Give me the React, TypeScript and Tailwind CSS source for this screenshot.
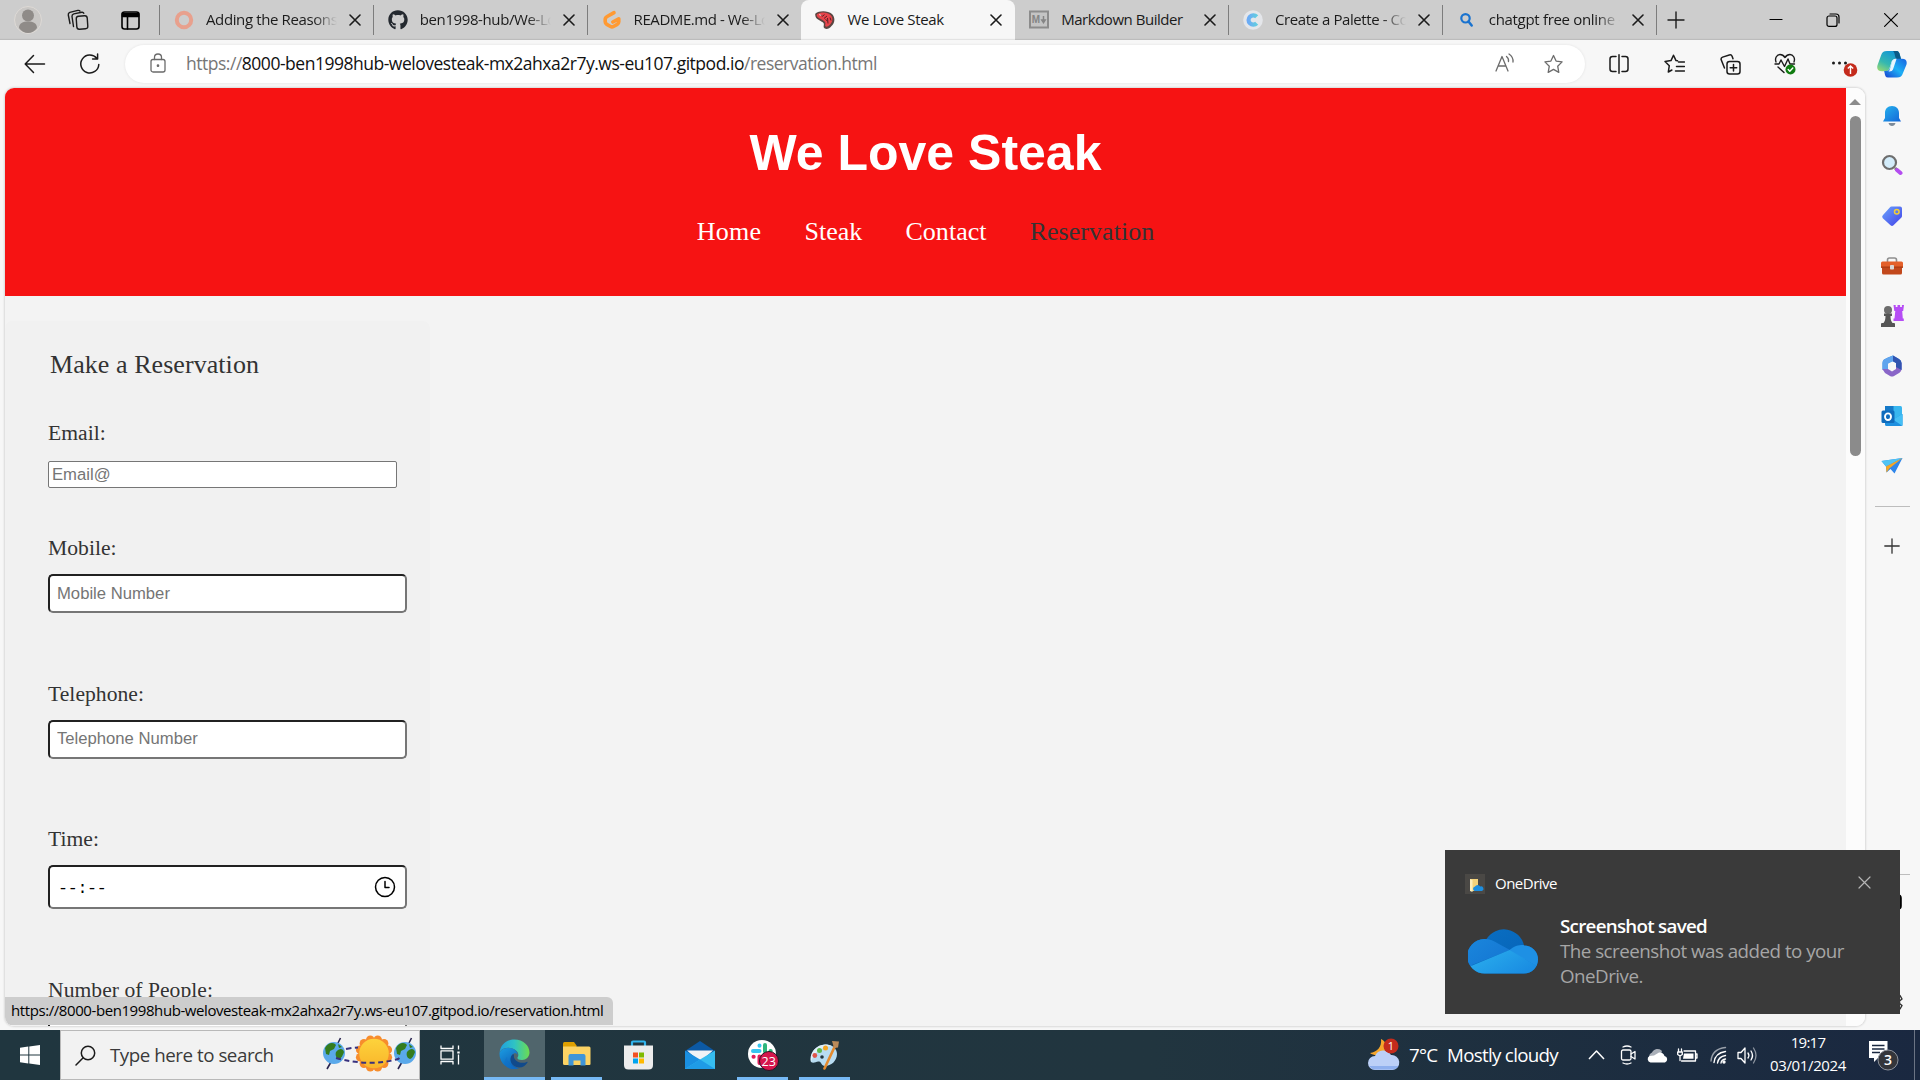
import React from "react";
import type { ReactNode } from "react";
import { FaGithub } from "react-icons/fa";

type IconProps = { w?: number; h?: number; vb?: string; sw?: number; className?: string; children: ReactNode };

/* Thin outline drawing, one user unit per pixel unless a viewBox is given. */
function Line({ w = 20, h = 20, vb, sw = 1.4, className = "", children }: IconProps) {
  return (
    <svg
      width={w}
      height={h}
      viewBox={vb ?? `0 0 ${w} ${h}`}
      fill="none"
      stroke="currentColor"
      strokeWidth={sw}
      strokeLinecap="round"
      strokeLinejoin="round"
      className={`block shrink-0 ${className}`}
    >
      {children}
    </svg>
  );
}

function Art({ w = 24, h = 24, vb, className = "", children }: IconProps) {
  return (
    <svg width={w} height={h} viewBox={vb ?? `0 0 ${w} ${h}`} className={`block shrink-0 ${className}`}>
      {children}
    </svg>
  );
}

/* ---------- tab strip ---------- */

const Close = () => (
  <Line w={12} h={12} sw={1.6} className="text-[#1b1b1b]">
    <path d="M1 1l10 10M11 1L1 11" />
  </Line>
);

const RingIcon = () => (
  <Art w={20} h={20}>
    <circle cx="10" cy="10" r="7.2" fill="none" stroke="#e8a08d" strokeWidth="4" />
  </Art>
);
const GitpodIcon = () => (
  <Art w={20} h={20}>
    <path
      d="M12 2.600L5.600 6.200Q3.200 7.500 3.200 9.200v2.600q0 1.700 1.600 2.600l3.700 2.100q1.500.8 3 0l3.700-2.100q1.600-.9 1.600-2.600V8.800L10.800 12"
      fill="none"
      stroke="#ff9a33"
      strokeWidth="3.600"
      strokeLinejoin="round"
      strokeLinecap="round"
    />
  </Art>
);
const SteakIcon = () => (
  <Art w={20} h={20}>
    <path d="M.5 3.500C4 .5 13 .500 17 4c3.500 3.500 3 9-.5 12-2 2.800-6 4-7.500 1.800-1-1.800.500-3-.5-4.800C7 11 1.500 10 .500 6.500.2 5 0 4.200.500 3.500z" fill="#5a4642" />
    <path d="M2 4.300C6 1.800 12.500 2 15.700 5.200c2.800 2.800 2 7-.8 9.500-1.600 1.600-3.800 2.600-4.500 1.600-.7-1.200.6-2.400-.3-4.100C8.500 9.500 3 8.700 2 6.300c-.3-.7-.4-1.200 0-2z" fill="#e8444a" />
    <path d="M5 4.800l2.500 1.400 2-1.600M9 8.500l3-2.500M12.500 8l.5 5.500M10.500 9.500l2 1.500M15 7.500l1 3" stroke="#5b2226" strokeWidth="1" fill="none" />
    <path d="M4.300 4.600l2 .8" stroke="#ffd8d0" strokeWidth="1.100" />
  </Art>
);
const MarkdownIcon = () => (
  <Art w={20} h={20}>
    <rect x="1" y="1.500" width="18" height="16" fill="#c4c4c4" stroke="#8c8c8c" strokeWidth="2" />
    <text x="2.800" y="13.300" fontSize="10" fontWeight="700" fill="#858585" fontFamily="Liberation Sans, sans-serif">M</text>
    <path d="M14.500 6v5.500M12.800 10l1.700 2.700 1.700-2.700z" stroke="#858585" strokeWidth="1.500" fill="#858585" />
  </Art>
);
const PaletteIcon = () => (
  <Art w={20} h={20}>
    <circle cx="10" cy="10" r="9.800" fill="#e4e6ea" />
    <path d="M13.700 6.800A4.700 4.700 0 1 0 13.700 13.200" fill="none" stroke="url(#pal)" strokeWidth="4.200" />
    <defs>
      <linearGradient id="pal" x1="0" x2="1">
        <stop offset="0" stopColor="#6cabf5" />
        <stop offset="1" stopColor="#62cde0" />
      </linearGradient>
    </defs>
  </Art>
);
const BingSearch = () => (
  <Art w={20} h={20}>
    <circle cx="8.500" cy="8.300" r="4.200" fill="none" stroke="#1a73cf" strokeWidth="2.200" />
    <path d="M11.500 11.500l3.200 4" stroke="#1a73cf" strokeWidth="2.500" strokeLinecap="round" />
  </Art>
);

type Tab = { title: string; icon: ReactNode; tracking: string; active?: boolean; divider?: boolean };
const tabs: Tab[] = [
  { title: "Adding the Reasons", icon: <RingIcon />, tracking: "tracking-[-0.380px]", divider: true },
  { title: "ben1998-hub/We-Lo", icon: <FaGithub size={20} color="#24292f" />, tracking: "tracking-[-0.400px]", divider: true },
  { title: "README.md - We-Lo", icon: <GitpodIcon />, tracking: "tracking-[-0.430px]" },
  { title: "We Love Steak", icon: <SteakIcon />, tracking: "tracking-[-0.360px]", active: true },
  { title: "Markdown Builder", icon: <MarkdownIcon />, tracking: "tracking-[-0.470px]", divider: true },
  { title: "Create a Palette - Co", icon: <PaletteIcon />, tracking: "tracking-[-0.420px]", divider: true },
  { title: "chatgpt free online -", icon: <BingSearch />, tracking: "tracking-[-0.314px]", divider: true },
];

function TabItem({ tab }: { tab: Tab }) {
  const fades = !tab.active && tab.title !== "Markdown Builder";
  return (
    <div
      className={`flex h-10 w-[213.800px] shrink-0 items-center pl-[14px] ${tab.active ? "rounded-t-[8px] bg-[#f7f7f7]" : ""}`}
    >
      <span className="flex h-5 w-5 shrink-0 items-center justify-center">{tab.icon}</span>
      <span
        className={`ml-[12px] h-10 w-[131px] shrink-0 overflow-hidden text-[15px] leading-[38px] whitespace-nowrap text-[#1b1b1b] ${tab.tracking} ${
          fades ? "[mask-image:linear-gradient(to_right,black_82%,transparent)]" : ""
        }`}
      >
        {tab.title}
      </span>
      <span className="ml-[12px]">
        <Close />
      </span>
      {tab.divider && <span className="ml-auto h-[30px] w-px bg-[#7d7d7d]" />}
    </div>
  );
}

function TabStrip() {
  return (
    <div className="flex h-10 shrink-0 items-center bg-[#cdcdcd]">
      <Art w={28} h={28} className="ml-[14px]">
        <circle cx="14" cy="14" r="13.500" fill="#c9c7c5" stroke="#dedad6" />
        <circle cx="14" cy="9.500" r="6" fill="#8f8b88" />
        <path d="M5 22c0-5 4-6.500 9-6.500s9 1.500 9 6.500c-2.500 3.500-5.500 5-9 5s-6.500-1.500-9-5z" fill="#8f8b88" />
      </Art>
      <Line w={22} h={22} sw={1.400} className="ml-[25px] text-[#1b1b1b]">
        <rect x="9.500" y="7" width="11" height="13" rx="2.500" transform="rotate(-4 15 13)" />
        <path d="M6.500 17.500L5 7.500q-.2-2 1.800-2.600l8-1.600q1.600-.2 2 1" />
        <path d="M3 14.500L1.300 6q-.3-2 1.500-2.600l8-2q1.600-.3 2.200.7" />
      </Line>
      <Line w={19} h={19} sw={1.600} className="ml-[32px] text-black">
        <rect x="1" y="1" width="17" height="17" rx="2.500" />
        <path d="M1.500 2.500h16v3h-16z" fill="currentColor" />
        <path d="M6.500 5v13" />
      </Line>
      <span className="ml-[19px] h-[30px] w-px bg-[#7d7d7d]" />
      <div className="flex">
        {tabs.map((t) => (
          <TabItem key={t.title} tab={t} />
        ))}
      </div>
      <Line w={18} h={18} sw={1.400} className="ml-[10px] text-[#1b1b1b]">
        <path d="M9 1v16M1 9h16" />
      </Line>
      <Line w={14} h={14} sw={1.200} className="mr-[43px] ml-auto text-black">
        <path d="M1 6.500h12" />
      </Line>
      <Line w={14} h={14} sw={1.200} className="mr-[44px] text-black">
        <rect x="1" y="3" width="10" height="10.400" rx="2" />
        <path d="M4 1h6q3 0 3 3v6" />
      </Line>
      <Line w={14} h={14} sw={1.200} className="mr-[22px] text-black">
        <path d="M.6.6l12.800 12.800M13.400.6L.6 13.400" />
      </Line>
    </div>
  );
}

/* ---------- toolbar ---------- */

const STAR = "M10 1.500l2.600 5.600 6 .8-4.400 4.300 1.100 6.200L10 15.400l-5.300 3 1.100-6.200L1.400 7.900l6-.8z";

function Copilot() {
  return (
    <Art w={30} h={28}>
      <defs>
        <linearGradient id="cpA" x1="0" y1="1" x2=".6" y2="0">
          <stop offset="0" stopColor="#a5dc6a" />
          <stop offset=".45" stopColor="#35b8b0" />
          <stop offset="1" stopColor="#1397d5" />
        </linearGradient>
        <linearGradient id="cpB" x1="0" y1="1" x2="1" y2="0">
          <stop offset="0" stopColor="#1840d0" />
          <stop offset=".5" stopColor="#1db0f5" />
          <stop offset="1" stopColor="#1a62e0" />
        </linearGradient>
      </defs>
      <path d="M10 1h9c3 0 3.500 2 4.200 5l.8 3h-5c-3 0-4 1-4.800 4l-1.600 5c-.8 2.500-2 3.300-4.500 3.300H5c-4 0-5.500-2.500-4.500-6L4 5.500C5 2.300 6.500 1 10 1z" fill="url(#cpA)" />
      <path d="M16 1h3c3 0 3.500 2 4.200 5l.8 3h-5c-1.500-4-1-6-3-8z" fill="#0b5a87" />
      <path d="M20 27.500h-9c-2.500 0-3-2-3.500-5l-.3-1.400h1.600c2.500 0 3.500-1 4.300-3.500l1.700-5.300c.8-2.500 1.700-3.600 4.200-3.600h6c4 0 5.400 2.500 4.400 6L26 23c-1 3.200-2.500 4.500-6 4.500z" fill="url(#cpB)" />
      <path d="M14.800 12q1-3.300 3.800-3.300h1L16 19.500q-.6 2-3.500 2h-1q1-.7 1.600-3z" fill="#fff" opacity=".9" />
    </Art>
  );
}

function Toolbar() {
  return (
    <div className="flex h-12 shrink-0 items-center bg-[#f7f7f7] shadow-[0_-1px_1px_rgba(0,0,0,0.08)]">
      <Line w={22} h={20} sw={1.500} className="ml-[24px] text-[#1b1b1b]">
        <path d="M20.500 10H1.500M9.500 1.500L1.200 10l8.300 8.500" />
      </Line>
      <Line w={22} h={22} sw={1.500} className="ml-[33px] text-[#1b1b1b]">
        <path d="M19.800 11.500A9 9 0 1 1 17.800 5.300M18.600 1v5h-5" />
      </Line>
      <div className="ml-[24px] flex h-[38px] w-[1460px] items-center rounded-full bg-white shadow-[0_0_3px_rgba(0,0,0,0.09)]">
        <Line w={16} h={20} sw={1.300} className="mb-[2px] ml-[25px] text-[#6b6b6b]">
          <rect x="1" y="6.500" width="14" height="12.500" rx="2" />
          <path d="M4.500 6.500V4.200a3.500 3.200 0 0 1 7 0v2.300" />
          <circle cx="8" cy="12.700" r=".7" fill="currentColor" />
        </Line>
        <p className="mb-[2px] ml-[20px] text-[17.500px] leading-[34px] tracking-[-0.484px] whitespace-nowrap text-[#767676]">
          https://<span className="text-[#111]">8000-ben1998hub-welovesteak-mx2ahxa2r7y.ws-eu107.gitpod.io</span>
          /reservation.html
        </p>
        <Line w={20} h={20} sw={1.300} className="mb-[2px] ml-auto text-[#6b6b6b]">
          <path d="M1 18L7 3.500 13 18M3 13h8M11.500 3.500q2.500 2 2 5M14 1q4.500 3 4 8" />
        </Line>
        <Line w={21} h={20} vb="0 0 20 20" sw={1.300} className="mr-[21px] ml-[28px] text-[#6b6b6b]">
          <path d={STAR} />
        </Line>
      </div>
      <div className="flex items-center text-[#1b1b1b]">
        <Line w={20} h={20} sw={1.500} className="ml-[24px]">
          <path d="M7 2.500H3.500Q1 2.500 1 5v10q0 2.500 2.500 2.500H7M13 2.500h3.500Q19 2.500 19 5v10q0 2.500-2.500 2.500H13M10 .8v18.400" />
        </Line>
        <Line w={21} h={20} sw={1.500} className="ml-[35px]">
          <path d="M13.500 6.800L12 6.600 9.500 1.200 7 6.600 1 7.500l4.300 4.200-1 6.300 3.600-2M14.500 8h6M12.500 12.500h8M11.500 17h9" />
        </Line>
        <Line w={21} h={21} sw={1.500} className="ml-[35px]">
          <rect x="7" y="7.500" width="13" height="12.500" rx="2.500" />
          <path d="M13.500 10.500v6.500M10.200 13.700h6.500M4.500 14L1.300 6q-.8-2 1.300-2.900L9.300 1q2-.6 2.800 1.200l.9 2.500" />
        </Line>
        <Line w={22} h={22} sw={1.400} className="ml-[33px]">
          <path d="M2 9C.5 5 3 1.500 6 1.500c2.500 0 4 1.500 5 3 1-1.500 2.500-3 5-3 3 0 5.500 3.500 4 7.500M1 11h4l2-4 3.500 6.500L14 6l2 5h4.500M4 14l6 5.500" />
          <circle cx="16.500" cy="16.500" r="5" fill="#107c10" stroke="none" />
          <path d="M14.200 16.600l1.600 1.600 3-3.200" stroke="#fff" />
        </Line>
        <Art w={28} h={26} className="ml-[35px]">
          <circle cx="2.500" cy="12" r="1.500" fill="#1b1b1b" />
          <circle cx="8.500" cy="12" r="1.500" fill="#1b1b1b" />
          <circle cx="14.500" cy="12" r="1.500" fill="#1b1b1b" />
          <circle cx="19.500" cy="19" r="6.800" fill="#c42b1c" />
          <path d="M19.500 23v-7.500M16.800 17.500l2.700-2.500 2.700 2.500" stroke="#fff" strokeWidth="1.400" fill="none" />
        </Art>
        <div className="ml-[18px]">
          <Copilot />
        </div>
      </div>
    </div>
  );
}

/* ---------- web page ---------- */

function TextInput({ placeholder, pad = "pb-[2px]" }: { placeholder: string; pad?: string }) {
  return (
    <input
      placeholder={placeholder}
      className={`mt-[14px] h-[39px] w-[359px] shrink-0 rounded-[5px] border-2 border-t-[#212121] border-r-[#767676] border-b-[#767676] border-l-[#212121] bg-white px-[7px] text-[16.670px] outline-none placeholder:text-[#757575] placeholder:opacity-100 ${pad}`}
    />
  );
}

const labelStyle = "text-[21.600px] leading-6 tracking-[0.040px] whitespace-nowrap";

function WebPage() {
  return (
    <div className="h-full w-[1841px] overflow-hidden bg-[#f3f3f3]">
      <header className="flex h-[208px] flex-col items-center bg-[#f61313] pt-[37px] text-white">
        <h1 className="text-[50px] leading-[56px] font-bold">We Love Steak</h1>
        <nav className="mt-[36px] flex gap-[43px] font-['Liberation_Serif',serif] text-[26px] leading-[30px] tracking-[0.050px]">
          <a className="tracking-[0.300px]">Home</a>
          <a>Steak</a>
          <a>Contact</a>
          <a className="text-[#333]">Reservation</a>
        </nav>
      </header>
      <form className="mt-[25px] flex h-[760px] w-[425px] flex-col items-start rounded-[8px] bg-[#f1f1f1] pt-[29px] pl-[43px] font-['Liberation_Serif',serif] text-[#333]">
        <h2 className="ml-[2px] text-[26px] leading-[30px] tracking-[0.060px]">Make a Reservation</h2>
        <label className={`mt-[41px] ${labelStyle}`}>Email:</label>
        <input
          placeholder="Email@"
          className="mt-[16px] h-[27px] w-[349px] shrink-0 rounded-[2px] border border-[#767676] bg-white px-[3px] font-['Liberation_Sans',sans-serif] text-[16.670px] outline-none placeholder:text-[#757575] placeholder:opacity-100"
        />
        <label className={`mt-[48px] ${labelStyle}`}>Mobile:</label>
        <div className="font-['Liberation_Sans',sans-serif]">
          <TextInput placeholder="Mobile Number" pad="pb-0" />
        </div>
        <label className={`mt-[69px] ${labelStyle}`}>Telephone:</label>
        <div className="font-['Liberation_Sans',sans-serif]">
          <TextInput placeholder="Telephone Number" />
        </div>
        <label className={`mt-[68px] ${labelStyle}`}>Time:</label>
        <div className="mt-[14px] flex h-[44px] w-[359px] shrink-0 items-center justify-between rounded-[5px] border-2 border-t-[#212121] border-r-[#767676] border-b-[#767676] border-l-[#212121] bg-white pr-[9px] pl-[8px] text-black">
          <span className="pt-[3px] font-['Liberation_Mono',monospace] text-[16.670px] leading-6 tracking-[-0.300px]">--:--</span>
          <Line w={22} h={22} sw={1.500}>
            <circle cx="11" cy="11" r="9.500" />
            <path d="M11 5.500V11.500h4" />
          </Line>
        </div>
        <label className={`mt-[69px] ${labelStyle}`}>Number of People:</label>
        <div className="font-['Liberation_Sans',sans-serif]">
          <TextInput placeholder="" />
        </div>
      </form>
    </div>
  );
}

function Viewport() {
  return (
    <div className="relative ml-[5px] flex h-[938px] w-[1860px] overflow-hidden rounded-[9px] bg-[#fcfcfc] shadow-[0_0_2px_1px_rgba(0,0,0,0.12)]">
      <WebPage />
      <div className="flex w-[19px] flex-col items-center bg-[#fcfcfc] pt-[11px] pr-px">
        <Art w={12} h={6}>
          <path d="M6 0l6 6H0z" fill="#8b8b8b" />
        </Art>
        <div className="mt-[11px] h-[340px] w-[11px] rounded-full bg-[#8b8b8b]" />
      </div>
      <div className="absolute bottom-px left-0 h-[28px] w-[608px] rounded-tr-[6px] bg-[#cdcdcd] pl-[6px] font-['Open_Sans',sans-serif] text-[15px] leading-[27px] tracking-[-0.415px] whitespace-nowrap text-black">
        https://8000-ben1998hub-welovesteak-mx2ahxa2r7y.ws-eu107.gitpod.io/reservation.html
      </div>
    </div>
  );
}

/* ---------- Edge side bar ---------- */

const sideIcons: ReactNode[] = [
  <Art key="bell" w={20} h={22}>
    <path d="M10 1c4.500 0 7 3 7 7v5l2 3.500H1L3 13V8c0-4 2.500-7 7-7z" fill="url(#bell)" />
    <path d="M6.500 18h7c-.5 2-1.800 3-3.500 3s-3-1-3.500-3z" fill="#7c8a99" />
    <defs>
      <linearGradient id="bell" x2="1" y2="1">
        <stop offset="0" stopColor="#25b4ee" />
        <stop offset="1" stopColor="#1465d8" />
      </linearGradient>
    </defs>
  </Art>,
  <Art key="search" w={22} h={22} className="mb-[3px]">
    <path d="M14 14l2 1.800" stroke="#777" strokeWidth="3" />
    <path d="M16 16l3.500 3" stroke="#b44df0" strokeWidth="4" strokeLinecap="round" />
    <circle cx="8.500" cy="8.500" r="6.500" fill="#d3ecfa" stroke="#6e6e6e" strokeWidth="2.200" />
  </Art>,
  <Art key="tag" w={22} h={22}>
    <path d="M10.500 1.500h8.500q2 0 2 2v7.500q0 1-.8 1.800l-7.700 7.500q-1.500 1.300-3 0l-7.700-7q-1.300-1.500 0-3l7-7.800q.7-1 1.700-1z" fill="url(#tag)" />
    <circle cx="15.800" cy="6.800" r="2.300" fill="#5a7cf0" stroke="#f5cf35" strokeWidth="1.500" />
    <defs>
      <linearGradient id="tag" x1="0" y1="0" x2="1" y2="1">
        <stop offset="0" stopColor="#6aa5fb" />
        <stop offset="1" stopColor="#4340e8" />
      </linearGradient>
    </defs>
  </Art>,
  <Art key="toolbox" w={24} h={20}>
    <path d="M7.500 6V4q0-2 2-2h5q2 0 2 2v2" fill="none" stroke="#8e8e8e" strokeWidth="1.600" />
    <rect x="2" y="9" width="20" height="9.500" rx="1.500" fill="#c2481c" />
    <path d="M2.500 5.500h19q1.500 0 1.500 1.500v4.500H1V7q0-1.500 1.500-1.500z" fill="#e4602a" />
    <rect x="1" y="10.500" width="22" height="1.300" fill="#a83a12" />
    <rect x="10" y="9" width="4" height="4.500" rx=".8" fill="#d8d8d8" />
  </Art>,
  <Art key="chess" w={24} h={24}>
    <path d="M13.500 1h2.200v2h1.800V1h2.600v2h1.800V1H24l-.8 6h-1l.6 7.500h1v2.500H13.500v-2.500h1L15.300 7h-1z" fill="#b64df5" />
    <circle cx="8" cy="6" r="4" fill="#6c6c6c" />
    <path d="M4 9.500h8V12h-1.500c0 3 .5 5 2 7H14q1 0 1 1v3H1v-3q0-1 1-1h1.500c1.500-2 2-4 2-7H4z" fill="#555" />
  </Art>,
  <Art key="m365" w={22} h={22}>
    <path d="M7 2.500l5-2 6 3.500q2.500 1.500 2.500 4v7L15 12V8l-4-2-4 2.500v5L1.500 15V8q0-2.500 1.500-3.500z" fill="#3e8be0" />
    <path d="M1.500 8q0-2.500 1.500-3.500L7 2.500 12 .5v5.800L7 8.500v6L4 17l-2.500-3z" fill="#5fa4ee" />
    <path d="M20.500 8v6q0 2.500-2 3.700l-5.500 3.400q-2 1-4 0L4 18l-2.500-4L7 14l4 2.500 4-2.500V8l3-2.500z" fill="#8a66c8" />
    <path d="M15 8l-3-1.700V.6l6 3.500q2.500 1.500 2.500 4v7L15 12z" fill="#3154b0" />
  </Art>,
  <Art key="outlook" w={22} h={22}>
    <rect x="4" y="1" width="17" height="13" rx="1.500" fill="#38b6ef" />
    <rect x="4" y="1" width="8.500" height="6" fill="#1579c8" />
    <path d="M4 9l9 5 8.500-5v10.500q0 1.500-1.500 1.500H5.500Q4 21 4 19.500z" fill="#1e90e0" />
    <path d="M21.500 9v12L12 14.500z" fill="#45bff5" />
    <rect x=".5" y="5.500" width="13" height="12.500" rx="1.500" fill="#0f6cbd" />
    <ellipse cx="7" cy="11.700" rx="3" ry="3.300" fill="none" stroke="#fff" strokeWidth="1.900" />
  </Art>,
  <Art key="drop" w={22} h={20}>
    <path d="M.5 5L21.500 2 13.500 17.500 9.500 13 5.500 16.500 5 10.500z" fill="#2f86ea" />
    <path d="M.5 5L21.500 2 5 10.500z" fill="#50c4f4" />
    <path d="M5 10.500L21.500 2 8.300 12.500 5.500 16.500z" fill="#f5a623" />
  </Art>,
];

function SideBar() {
  return (
    <aside className="flex h-full w-[55px] flex-col items-center overflow-hidden pt-[3px] pr-px">
      {sideIcons.map((icon, i) => (
        <div key={i} className="flex h-[50px] shrink-0 items-center justify-center">
          {icon}
        </div>
      ))}
      <div className="mt-[15px] h-px w-[35px] shrink-0 bg-[#bdbdbd]" />
      <div className="flex h-[78px] shrink-0 items-center text-[#333]">
        <Line w={16} h={16} sw={1.300}>
          <path d="M8 .8v14.400M.8 8h14.400" />
        </Line>
      </div>
      <div className="mt-[289px] h-px w-[35px] shrink-0 bg-[#bdbdbd]" />
      <div className="mt-[17px]">
        <Line w={20} h={20} sw={1.600} className="text-black">
          <rect x="1" y="3" width="18" height="14" rx="3" fill="currentColor" />
        </Line>
      </div>
      <div className="mt-[79px]">
        <Line w={22} h={22} sw={1.500} className="text-[#333]">
          <path d="M9 1h4l.5 3 2.500 1.500 3-1 2 3.500-2.500 2v2.500l2.500 2-2 3.500-3-1L13.500 18l-.5 3H9l-.5-3L6 16.500l-3 1L1 14l2.500-2V9.500L1 7.500 3 4l3 1 2.500-1.500z" />
          <circle cx="11" cy="11" r="3" />
        </Line>
      </div>
    </aside>
  );
}

/* ---------- toast ---------- */

function Toast() {
  return (
    <div className="absolute top-[850px] left-[1445px] flex h-[164px] w-[455px] flex-col bg-[#3a3a3a] font-['Open_Sans',sans-serif]">
      <div className="mt-[24px] flex h-5 items-center pr-[29px] pl-5">
        <Art w={20} h={20} className="bg-[#4a4845]">
          <path d="M5 5h8v12H5z" fill="#f3d27a" />
          <path d="M5 5l2.500 1v12L5 17z" fill="#fdeebb" />
          <path d="M9.500 17a2.300 2.300 0 0 1 .5-4.400 3 3 0 0 1 5.300 0 2.200 2.200 0 0 1 1.700 4.400z" fill="#1c8ee0" />
        </Art>
        <span className="mb-[2px] ml-[10px] text-[15px] leading-5 tracking-[-0.500px] text-white">OneDrive</span>
        <Line w={13} h={13} sw={1.200} className="mb-[4px] ml-auto text-[#b5b5b5]">
          <path d="M1 1l11 11M12 1L1 12" />
        </Line>
      </div>
      <div className="mt-[19px] flex pl-[23px]">
        <Art w={70} h={46} className="mt-[15px]">
          <defs>
            <linearGradient id="odA" x2="1" y2="1">
              <stop offset="0" stopColor="#0a70c4" />
              <stop offset="1" stopColor="#0560b4" />
            </linearGradient>
            <linearGradient id="odB" x2="1" y2="1">
              <stop offset="0" stopColor="#1a86dc" />
              <stop offset="1" stopColor="#1372d0" />
            </linearGradient>
            <linearGradient id="odC" x2="1" y2=".6">
              <stop offset="0" stopColor="#2bb0ee" />
              <stop offset="1" stopColor="#1a8de2" />
            </linearGradient>
            <clipPath id="od">
              <path d="M17 45.500A17 17 0 0 1 16 11q1.500 0 2.500.1A20.500 20.500 0 0 1 56 17.500 14 14 0 0 1 56 45.500z" />
            </clipPath>
          </defs>
          <g clipPath="url(#od)">
            <rect width="72" height="46" fill="url(#odA)" />
            <path d="M0 46V11h16c6 0 10 2 14 4.500L42 22 4 37z" fill="url(#odB)" />
            <path d="M41 22.500C46 18 50 17 55 17h15v22z" fill="#1e90e4" />
            <path d="M3 38l38.500-16L69 38v8H3z" fill="url(#odC)" />
          </g>
        </Art>
        <div className="ml-[22px] text-[18.750px] leading-[25px] whitespace-nowrap">
          <p className="font-semibold tracking-[-0.719px] text-white">Screenshot saved</p>
          <p className="tracking-[-0.509px] text-[#a6a6a6]">The screenshot was added to your</p>
          <p className="tracking-[-0.509px] text-[#a6a6a6]">OneDrive.</p>
        </div>
      </div>
    </div>
  );
}

/* ---------- task bar ---------- */

function Globe({ x }: { x: number }) {
  return (
    <g transform={`translate(${x} 18)`}>
      <path d="M6.500-15L3-8M-3 9l-4 7" stroke="#2a2550" strokeWidth="1.600" />
      <circle r="11" fill="#5aa9ea" />
      <path d="M-9-5C-6-11 0-11 2-8l-2 4-4 2-1 4-3-1zM2-1c3-4 7-4 8 0-1 3-3 7-5 7-3-1-4-4-3-7zM4-9l4 3-3 1z" fill="#347c1d" />
    </g>
  );
}

const petals = [
  [13.8, 3.7], [10.1, 10.1], [3.7, 13.8], [-3.7, 13.8], [-10.1, 10.1], [-13.8, 3.7],
  [-13.8, -3.7], [-10.1, -10.1], [-3.7, -13.8], [3.7, -13.8], [10.1, -10.1], [13.8, -3.7],
];

const SearchArt = () => (
  <Art w={96} h={38}>
    <defs>
      <linearGradient id="sun" x2="0" y2="1">
        <stop offset="0" stopColor="#fdd33c" />
        <stop offset="1" stopColor="#f9b52a" />
      </linearGradient>
    </defs>
    <Globe x={12} />
    <Globe x={83} />
    {petals.map(([x, y]) => (
      <circle key={`${x},${y}`} cx={52 + x} cy={18.5 + y} r="4.300" fill="#f78d2c" />
    ))}
    <circle cx="52" cy="18.500" r="14.800" fill="url(#sun)" />
    <path d="M24 14q7-1.500 12-1.500M14 23q34 9 62 1l4-3" fill="none" stroke="#38317e" strokeWidth="2" strokeDasharray="5 3.500" />
  </Art>
);

const EdgeIcon = () => (
  <Art w={31} h={31}>
    <defs>
      <linearGradient id="eg1" x1="0" y1=".3" x2="1" y2=".3">
        <stop offset="0" stopColor="#1f9fe0" />
        <stop offset=".5" stopColor="#2fc3c4" />
        <stop offset="1" stopColor="#6ddc4f" />
      </linearGradient>
      <linearGradient id="eg2" x1="0" y1="0" x2=".6" y2="1">
        <stop offset="0" stopColor="#1b9de2" />
        <stop offset="1" stopColor="#0d60b8" />
      </linearGradient>
    </defs>
    <path d="M.7 13C1.500 6 7.500.5 15.500.5 24 .5 30.500 6.500 30.500 13.500c0 4.500-3.500 7.500-7.500 7.500-3.500 0-5-1.200-4.500-2.500 1.500-2 1-5-1.500-7C12 7.500 4 8 .7 13z" fill="url(#eg1)" />
    <path d="M.6 13.500C2.500 9.500 7 8.500 11 9c5 .7 8 4 7.500 7-.5-2-3.500-2.500-5.500 0-2.500 3.500-.5 10 4.500 12.500.8.4 1.500.6 2.500.8C12 32.500-.5 26 .6 13.500z" fill="url(#eg2)" />
    <path d="M13 16c-4 5 0 12 7 12.500 4 0 6.500-2 8.500-5 .3-.6-.2-.9-.8-.6-3 1.500-8 1.200-10.700-1.400C15.300 20 14.500 18 15 16c.2-.8-1.200-.9-2 0z" fill="#114a8b" />
    <path d="M8 18c0 5 4 10.500 12 11.300C10 33 1.500 26 8 18z" fill="#1172c8" opacity=".6" />
  </Art>
);

const FolderIcon = () => (
  <Art w={28} h={24} className="mb-[2px]">
    <path d="M0 1.500Q0 0 1.500 0H11l2.500 3.500v3H0z" fill="#dfa000" />
    <path d="M0 4.500h26q1.500 0 1.500 1.500v16q0 1-1 1H1.500Q0 23 0 21.500z" fill="#fcd364" />
    <path d="M5.500 23.500V14q0-2 2-2h13q2 0 2 2v9.500h-5v-5h-7v5z" fill="#3f95d8" />
  </Art>
);

const StoreIcon = () => (
  <Art w={29} h={30}>
    <path d="M8 7V2.500q0-1 1-1h11q1 0 1 1V7" fill="none" stroke="#30b5ee" strokeWidth="2.200" />
    <path d="M0 5.500h29V25q0 4.500-4.500 4.500h-20Q0 29.500 0 25z" fill="#ececec" />
    <path d="M9 12.500h5v5H9z" fill="#f25022" />
    <path d="M15 12.500h5v5h-5z" fill="#7fba00" />
    <path d="M9 18.500h5v5H9z" fill="#00a4ef" />
    <path d="M15 18.500h5v5h-5z" fill="#ffb900" />
  </Art>
);

const MailIcon = () => (
  <Art w={30} h={28}>
    <path d="M0 10L15 0l15 10v4H0z" fill="#0c59a4" />
    <path d="M2 9.500h26L15 21z" fill="#f0f3f6" />
    <path d="M0 9.500l15 9v9.500H0z" fill="#1a8fe0" />
    <path d="M30 9.500v18.500H0L15 18.500z" fill="#36bdf0" />
    <path d="M0 28L15 18.500 30 28z" fill="#1f9be6" />
  </Art>
);

const SlackIcon = () => (
  <Art w={32} h={32}>
    <circle cx="15" cy="15" r="14" fill="#fff" />
    <g strokeWidth="4" strokeLinecap="round">
      <path d="M6 12h6.500M12.500 6.500v.2" stroke="#36c5f0" />
      <path d="M18 6v6.500M23.500 12h.2" stroke="#2eb67d" />
      <path d="M12.500 17.500V24M6.500 17.700h.2" stroke="#e01e5a" />
      <path d="M18 17.700h6" stroke="#ecb22e" />
    </g>
    <circle cx="22" cy="22" r="9.500" fill="#d5164d" stroke="#2a1624" strokeWidth="1" />
    <text x="21.700" y="26.500" textAnchor="middle" fontSize="12.500" fill="#fff" fontFamily="Open Sans, sans-serif">23</text>
  </Art>
);

const PaintIcon = () => (
  <Art w={30} h={30}>
    <path d="M1 22C-1 13 6 5 15 4.500c7-.3 12 4 12 9.500 0 7-6 12-12 12-4 0-3-4-6-4.500C6 21 4 24 1 22z" fill="#b8dcf2" />
    <path d="M1 22C-1 13 6 5 15 4.500c3 0 5 .6 7 1.700C12 6 4 12 1 22z" fill="#dff0fa" />
    <circle cx="4.800" cy="15.500" r="2.400" fill="#e0554b" />
    <circle cx="9.500" cy="10.500" r="2.500" fill="#5fb84d" />
    <circle cx="15.500" cy="8" r="2.500" fill="#f5a623" />
    <circle cx="12" cy="17" r="1.800" fill="#23363f" />
    <path d="M25 6L14.500 28.500" stroke="#e48a2e" strokeWidth="2.600" strokeLinecap="round" />
    <path d="M22 1l7 .5-1 6-4 .5z" fill="#b98a5a" />
  </Art>
);

function TaskButton({ icon, state, w }: { icon: ReactNode; state: "active" | "open" | "idle"; w: string }) {
  return (
    <div className={`flex h-full shrink-0 flex-col items-center ${w} ${state === "active" ? "bg-[#50656c]" : ""}`}>
      <div className="flex h-[47px] items-center pt-[2px]">{icon}</div>
      {state !== "idle" && <div className={`h-[3px] bg-[#76b9f5] ${state === "active" ? "w-full" : "w-[51px]"}`} />}
    </div>
  );
}

function TaskBar() {
  return (
    <div className="flex h-[50px] shrink-0 items-center bg-linear-to-r from-[#20363f] via-[#21353f] via-60% to-[#1a2840] font-['Open_Sans',sans-serif] text-white">
      <div className="flex w-[60px] shrink-0 justify-center">
        <Art w={20} h={20}>
          <path d="M0 2.800L8.300 1.600v7.900H0zM9.300 1.400L20 0v9.500H9.300zM0 10.500h8.300v7.900L0 17.300zM9.300 10.500H20V20L9.300 18.600z" fill="#fff" />
        </Art>
      </div>
      <div className="flex h-[50px] w-[360px] shrink-0 items-center border border-[#b9b9b9] bg-[#f2f2f2]">
        <Line w={21} h={21} sw={1.500} className="ml-[14px] text-[#1b1b1b]">
          <circle cx="13" cy="8" r="6.700" />
          <path d="M8.200 12.800L1 20" />
        </Line>
        <span className="ml-[14px] text-[18.750px] leading-[48px] tracking-[-0.470px] whitespace-nowrap text-[#3a3a3a]">
          Type here to search
        </span>
        <span className="mr-px mb-[2px] ml-auto">
          <SearchArt />
        </span>
      </div>
      <div className="flex w-[64px] shrink-0 justify-center pr-[4px]">
        <Line w={20} h={20} sw={1.300} className="text-white">
          <path d="M1 .5V3.500h12V.5M1 5.800h12v8.400H1zM1 19.500v-3h12v3M18.500.5v4M18.500 9.500v10" strokeLinecap="butt" />
          <path d="M17.300 6.500h2.400v2h-2.400z" fill="currentColor" stroke="none" />
        </Line>
      </div>
      <TaskButton w="w-[61px]" state="active" icon={<EdgeIcon />} />
      <TaskButton w="w-[63px]" state="open" icon={<FolderIcon />} />
      <TaskButton w="w-[61px]" state="idle" icon={<StoreIcon />} />
      <TaskButton w="w-[62px]" state="idle" icon={<MailIcon />} />
      <TaskButton w="w-[63px]" state="open" icon={<SlackIcon />} />
      <TaskButton w="w-[61px]" state="open" icon={<PaintIcon />} />
      <div className="ml-auto flex h-full items-center">
        <Art w={32} h={32} className="mb-[2px]">
          <path d="M13 1c5 2 7 8 3 13-4 4-10 4-14 1C9 14 14 9 13 1z" fill="#f5a62c" />
          <path d="M7 32a7 7 0 0 1 0-14 9 9 0 0 1 16-1 7.500 7.500 0 0 1 1.500 15z" fill="#bcd0f7" />
          <path d="M1 28q3 3.500 6 3.500h17.500q4 0 6-3.500z" fill="#8fb0ee" />
          <circle cx="23" cy="8" r="7.500" fill="#c42b1c" />
          <text x="23" y="12" textAnchor="middle" fontSize="11" fill="#fff" fontFamily="Open Sans, sans-serif">1</text>
        </Art>
        <span className="ml-[9px] w-[28px] text-[18.750px] leading-[48px] tracking-[-0.700px] whitespace-nowrap">7°C</span>
        <span className="ml-[10px] w-[112px] text-[18.750px] leading-[48px] tracking-[-0.701px] whitespace-nowrap">Mostly cloudy</span>
        <Line w={17} h={10} sw={1.500} className="ml-[29px]">
          <path d="M1 9l7.500-8L16 9" strokeLinecap="butt" />
        </Line>
        <Line w={17} h={20} sw={1.300} className="ml-[15px]">
          <rect x="1.500" y="5" width="9.500" height="10" rx="1.500" />
          <path d="M11 9l4-2.500v7.500L11 11.500M3 2q4-2 8 0M3 18q4 2 8 0" />
        </Line>
        <Art w={21} h={15} className="ml-[10px]">
          <path d="M4 13a5 5 0 0 1 1-8.500A6 6 0 0 1 15 3l-3 8z" fill="#a9afb8" />
          <path d="M3.500 14.500a3.500 3.500 0 0 1-1-6.500l4.500-.5 5-3a5 5 0 0 1 5.500 3.500 3.400 3.400 0 0 1 .5 6.500z" fill="#fff" />
        </Art>
        <Line w={21} h={15} sw={1.300} className="ml-[9px]">
          <path d="M1.500 1v3M4.500 1v3M.7 4h4.600v2.500L3 8 .7 6.500zM3 8v4.500" />
          <path d="M7 3h11.500v10H4.500M19 6h1v4h-1" />
          <path d="M7 5.500h9.500v5.200H6z" fill="currentColor" stroke="none" />
        </Line>
        <Line w={17} h={18} sw={1.400} className="ml-[12px]">
          <path d="M1 15Q2 3 15.500 1.500" opacity=".55" />
          <path d="M4 16.500Q5 7 15.500 5.500M7.500 17Q8.500 10.500 15.500 9.500M11 17q.5-3.500 4.500-4" />
          <circle cx="14" cy="16" r="1" fill="currentColor" />
        </Line>
        <Line w={21} h={19} sw={1.300} className="ml-[10px]">
          <path d="M1 6.500h3l4-4.500v15l-4-4.500H1zM11 7q1.800 2.500 0 5M14 5q3 4.500 0 9" />
          <path d="M16.500 2q5 7.500 0 15" opacity=".5" />
        </Line>
        <div className="mb-[2px] ml-[8px] flex w-[84px] flex-col items-center text-[15px] leading-[23.500px] whitespace-nowrap">
          <span className="tracking-[-0.750px]">19:17</span>
          <span className="tracking-[-0.361px]">03/01/2024</span>
        </div>
        <Art w={32} h={36} className="mt-[6px] ml-[18px]">
          <path d="M1 1h18.500v17H10l-4 4v-4H1z" fill="#fff" />
          <path d="M4 5.500h12.500M4 9h12.500M4 12.500h8" stroke="#1a2840" strokeWidth="1.400" />
          <circle cx="20" cy="20" r="10" fill="#34363b" stroke="#8e939c" />
          <text x="20" y="25" textAnchor="middle" fontSize="14" fontWeight="600" fill="#fff" fontFamily="Open Sans, sans-serif">3</text>
        </Art>
        <div className="mr-[5px] ml-[14px] h-full w-px bg-[#6b7484]" />
      </div>
    </div>
  );
}

export default function App() {
  return (
    <div className="relative flex h-[1080px] w-[1920px] flex-col overflow-hidden bg-[#f7f7f7] font-['Liberation_Sans',sans-serif]">
      <div className="flex shrink-0 flex-col font-['Open_Sans',sans-serif]">
        <TabStrip />
        <Toolbar />
      </div>
      <div className="flex h-[942px] shrink-0">
        <Viewport />
        <SideBar />
      </div>
      <TaskBar />
      <Toast />
    </div>
  );
}
